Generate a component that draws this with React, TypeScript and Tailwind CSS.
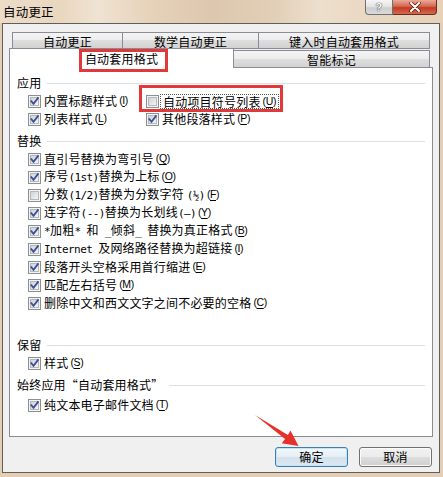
import React, { useId } from "react";

const Check = ({ checked = true }: { checked?: boolean }) => {
  const raw = useId();
  const id = "g" + raw.replace(/[^a-zA-Z0-9]/g, "");
  return (
    <svg width="13" height="13" viewBox="0 0 13 13" className="shrink-0">
      <defs>
        <linearGradient id={id} x1="0" y1="0" x2="1" y2="1">
          <stop offset="0" stopColor="#cdd1d6" />
          <stop offset="1" stopColor="#f7f7f7" />
        </linearGradient>
      </defs>
      <rect x="0.5" y="0.5" width="12" height="12" fill="#f4f4f4" stroke="#8e8f8f" />
      <rect x="2.5" y="2.5" width="8" height="8" fill={`url(#${id})`} stroke="#b4b8be" />
      {checked && (
        <path d="M3.3 6.2 L5.5 8.8 L9.9 3.1" fill="none" stroke="#3b5193" strokeWidth="1.8" strokeLinecap="square" />
      )}
    </svg>
  );
};

const L = ({ c }: { c: string }) => (
  <span className="font-['DejaVu_Sans_Mono',monospace] text-[11px] tracking-[-0.6px]">{c}</span>
);

const Mn = ({ k }: { k: string }) => (
  <span className="ml-[2px] font-['Liberation_Sans',sans-serif] text-[10.5px] tracking-[-0.4px]">
    (<span className="underline underline-offset-[2px]">{k}</span>)
  </span>
);

const Item = ({
  checked = true,
  children,
  k,
}: {
  checked?: boolean;
  children: React.ReactNode;
  k: string;
}) => (
  <div className="flex h-[18px] items-center">
    <Check checked={checked} />
    <span className="ml-[3px] whitespace-pre leading-[18px]">{children}</span>
    <Mn k={k} />
  </div>
);

const Header = ({ t }: { t: string }) => (
  <div className="flex h-[18px] items-center">
    <span className="whitespace-pre leading-[18px]">{t}</span>
    <div className="ml-[6px] h-px flex-1 bg-[#d8e0e6]" />
  </div>
);

const tabBg =
  "bg-[linear-gradient(180deg,#f4f4f4_0%,#ececec_50%,#dedede_50%,#d2d2d2_100%)]";

export default function App() {
  return (
    <div className="relative h-[477px] w-[443px] overflow-hidden bg-[#e4cfb5] font-['Noto_Sans_CJK_SC',sans-serif] text-[12px] tracking-[0.2px] text-black">
      {/* title bar */}
      <div className="flex h-[23px] items-start justify-between bg-[linear-gradient(90deg,#ecdcc8_0%,#e9d7c0_14%,#f0e3d3_22%,#e6d2b9_34%,#ddc8ae_48%,#e2cfb7_62%,#eddfcd_72%,#e8d6bf_86%,#e6d2b9_100%)]">
        <span className="pl-[3px] pt-[3px] text-[12.5px] leading-[17px]">自动更正</span>
        <div className="mr-[6px] flex">
          <div className="flex h-[15px] w-[28px] items-center justify-center rounded-bl-[4px] border border-t-0 border-[#707070] bg-[linear-gradient(180deg,#f6f6f6_0%,#e2e2e2_50%,#cdcdcd_55%,#dadada_100%)] font-['Liberation_Sans',sans-serif] text-[11px] font-bold leading-none text-white [text-shadow:0_0_1px_#333,0_0_1px_#333]">
            ?
          </div>
          <div className="flex h-[15px] w-[44px] items-center justify-center rounded-br-[4px] border border-l-0 border-t-0 border-[#6b2b22] bg-[linear-gradient(180deg,#eaa999_0%,#d66650_45%,#c13b22_55%,#d46a4f_100%)]">
            <svg width="12" height="10" viewBox="0 0 12 10">
              <path d="M2 1 L10 9 M10 1 L2 9" stroke="#5a1a10" strokeWidth="3.4" strokeLinecap="round" />
              <path d="M2 1 L10 9 M10 1 L2 9" stroke="#ffffff" strokeWidth="2" strokeLinecap="round" />
            </svg>
          </div>
        </div>
      </div>

      {/* body */}
      <div className="ml-[2px] flex h-[450px] w-[438px] flex-col border border-[#5e5e5e] bg-[#f0f0f0] px-[6px] pt-[8px]">
        {/* tabs row 1 */}
        <div className="ml-[3px] flex h-[17px]">
          <div className={`flex w-[111px] items-start justify-center border border-[#898c95] pt-[2px] leading-[14px] ${tabBg}`}>
            自动更正
          </div>
          <div className={`flex w-[136px] items-start justify-center border border-l-0 border-[#898c95] pt-[2px] leading-[14px] ${tabBg}`}>
            数学自动更正
          </div>
          <div className={`flex w-[171px] items-start justify-center border border-l-0 border-[#898c95] pt-[2px] leading-[14px] ${tabBg}`}>
            键入时自动套用格式
          </div>
        </div>
        {/* tabs row 2 */}
        <div className="relative z-10 -mt-px flex h-[20px] items-end">
          <div className="relative flex h-[20px] w-[225px] items-start justify-center border border-b-0 border-[#898c95] bg-white pt-[3px] leading-[14px]">
            自动套用格式
            <span className="absolute left-[69px] top-0 h-[23px] w-[89px] border-[3px] border-[#e0393a]" />
          </div>
          <div className={`mb-px flex h-[17px] w-[196px] items-start justify-center border border-b-0 border-l-0 border-[#898c95] pt-[2px] leading-[14px] ${tabBg}`}>
            智能标记
          </div>
        </div>

        {/* panel */}
        <div className="-mt-px flex h-[370px] flex-col border border-[#898c95] bg-white pl-[7px] pr-[7px] pt-[6px]">
          <Header t="应用" />
          <div className="ml-[11px] grid grid-cols-[118px_1fr]">
            <Item k="I">内置标题样式</Item>
            <div className="relative flex h-[18px] items-center">
              <span className="absolute left-[-7px] top-[-7px] h-[27px] w-[144px] border-[3px] border-[#e0393a]" />
              <Check checked={false} />
              <span className="ml-px flex h-[15px] items-center border border-dotted border-[#555] px-[2px] leading-[13px]">
                自动项目符号列表
                <Mn k="U" />
              </span>
            </div>
            <Item k="L">列表样式</Item>
            <Item k="P">其他段落样式</Item>
          </div>

          <div className="mt-[4px]">
            <Header t="替换" />
          </div>
          <div className="ml-[11px] flex flex-col">
            <Item k="Q">直引号替换为弯引号</Item>
            <Item k="O">
              序号<L c="(1st)" />替换为上标
            </Item>
            <Item k="F" checked={false}>
              分数<L c="(1/2)" />替换为分数字符 <L c="(½)" />
            </Item>
            <Item k="Y">
              连字符<L c="(--)" />替换为长划线<L c="(—)" />
            </Item>
            <Item k="B">
              <L c="*" />加粗<L c="* " />和<L c=" _" />倾斜<L c="_ " />替换为真正格式
            </Item>
            <Item k="I">
              <L c="Internet " />及网络路径替换为超链接
            </Item>
            <Item k="E">段落开头空格采用首行缩进</Item>
            <Item k="M">匹配左右括号</Item>
            <Item k="C">删除中文和西文文字之间不必要的空格</Item>
          </div>

          <div className="mt-[24px]">
            <Header t="保留" />
          </div>
          <div className="ml-[11px]">
            <Item k="S">样式</Item>
          </div>

          <div className="mt-[4px]">
            <Header t="始终应用“自动套用格式”" />
          </div>
          <div className="ml-[11px] mt-[2px]">
            <Item k="T">纯文本电子邮件文档</Item>
          </div>
        </div>

        {/* buttons */}
        <div className="mr-px mt-[10px] flex justify-end gap-[11px]">
          <button className="flex h-[20px] w-[73px] items-center justify-center rounded-[3px] border border-[#3c7fb1] bg-[linear-gradient(180deg,#f2f7fa_0%,#e6eff5_50%,#d3e1ec_52%,#dce8f1_100%)] leading-none shadow-[inset_0_0_0_1px_#c5e3f7]">
            确定
          </button>
          <button className="flex h-[20px] w-[73px] items-center justify-center rounded-[3px] border border-[#707070] bg-[linear-gradient(180deg,#f2f2f2_0%,#ebebeb_50%,#dddddd_52%,#cfcfcf_100%)] leading-none shadow-[inset_0_0_0_1px_#fbfbfb]">
            取消
          </button>
        </div>
      </div>

      {/* annotation arrow */}
      <svg className="pointer-events-none absolute left-0 top-0" width="443" height="477" viewBox="0 0 443 477">
        <polygon
          points="255,415 287.9,434.9 290.5,430.6 298.5,446 281.8,443.3 285.1,439.1"
          fill="#e8302a"
        />
      </svg>
    </div>
  );
}
